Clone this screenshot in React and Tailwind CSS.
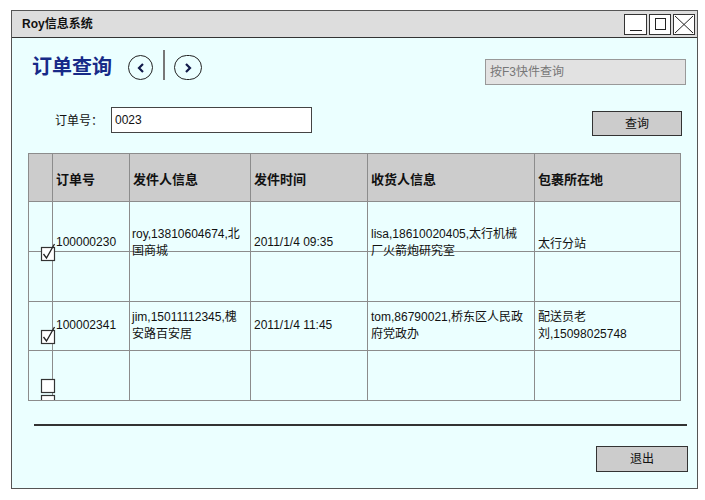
import React from 'react';

function Check({ checked }) {
  return (
    <svg width="14" height="14" viewBox="0 0 14 14" className="block overflow-visible">
      <rect x="0.5" y="0.5" width="13" height="13" fill="#fff" stroke="#333" strokeWidth="1.2" />
      {checked && <path d="M2.5 7 L5.5 11 L13.5 -3" fill="none" stroke="#222" strokeWidth="1.3" />}
    </svg>
  );
}

function Chevron({ dir }) {
  return (
    <svg width="10" height="12" viewBox="0 0 10 12">
      <polyline
        points={dir === 'left' ? '7,2 3,6 7,10' : '3,2 7,6 3,10'}
        fill="none"
        stroke="#111a4a"
        strokeWidth="2.2"
      />
    </svg>
  );
}

const headers = ['订单号', '发件人信息', '发件时间', '收货人信息', '包裹所在地'];

export default function App() {
  return (
    <div className="w-[705px] h-[500px] bg-white overflow-hidden font-['Liberation_Sans','Noto_Sans_CJK_SC',sans-serif] text-[#111]">
      <div className="ml-[11px] mt-[10px] w-[687px] h-[479px] border border-[#555] flex flex-col">
        {/* title bar */}
        <div className="h-[27px] shrink-0 bg-[#dddddd] border-b border-[#333] flex items-center justify-between pl-[10px] pr-[2px]">
          <span className="text-[12px] font-bold">Roy信息系统</span>
          <div className="flex gap-[2px]">
            <div className="w-[23px] h-[21px] bg-white border border-[#333] flex items-end justify-center pb-[3px]">
              <div className="w-[12px] h-px bg-[#222]" />
            </div>
            <div className="w-[22px] h-[21px] bg-white border border-[#333] flex items-center justify-center">
              <div className="w-[11px] h-[12px] border border-[#222]" />
            </div>
            <div className="w-[22px] h-[21px] bg-white border border-[#333] flex items-center justify-center">
              <svg width="20" height="19" viewBox="0 0 20 19">
                <path d="M1 1 L19 18 M19 1 L1 18" stroke="#222" strokeWidth="1" />
              </svg>
            </div>
          </div>
        </div>

        {/* content */}
        <div className="flex-1 bg-[#ebffff] flex flex-col">
          <div className="flex items-start pt-[12px] pl-[20px] pr-[11px]">
            <h1 className="w-[96px] mt-[5px] text-[20px] leading-[24px] font-bold text-[#172a88]">订单查询</h1>
            <div className="mt-[5px] w-[25px] h-[25px] rounded-full border border-[#222] flex items-center justify-center">
              <Chevron dir="left" />
            </div>
            <div className="ml-[10px] w-[2px] h-[30px] bg-[#777]" />
            <div className="ml-[9px] mt-[5px] w-[28px] h-[25px] rounded-full border border-[#222] flex items-center justify-center">
              <Chevron dir="right" />
            </div>
            <div className="flex-1" />
            <div className="mt-[9px] w-[201px] h-[26px] bg-[#e2e2e2] border border-[#999] pl-[4px] flex items-center text-[12px] text-[#777]">
              按F3快件查询
            </div>
          </div>

          <div className="flex items-start mt-[22px] pl-[43px] pr-[15px]">
            <span className="mt-[6px] w-[56px] text-[12px] leading-[16px]">订单号：</span>
            <div className="w-[201px] h-[26px] bg-white border border-[#444] pl-[3px] flex items-center text-[12px]">0023</div>
            <div className="flex-1" />
            <button className="mt-[4px] w-[90px] h-[25px] bg-[#cccccc] border border-[#333] text-[12px]">查询</button>
          </div>

          {/* table */}
          <div className="mt-[17px] ml-[16px] w-[653px] border-t border-l border-[#8c8c8c] grid grid-cols-[24px_77px_121px_117px_167px_146px] grid-rows-[48px_50px_50px_49px_50px] text-[12px] leading-[17px]">
            <div className="bg-[#cccccc] border-r border-b border-[#8c8c8c]" />
            {headers.map((h) => (
              <div key={h} className="bg-[#cccccc] border-r border-b border-[#8c8c8c] flex items-center pl-[3px] pt-[4px] text-[13px] font-bold">
                {h}
              </div>
            ))}

            {/* row 1 */}
            <div className="border-r border-b border-[#8c8c8c] flex justify-end pt-[45px]">
              <div className="-mr-[3px] relative"><Check checked /></div>
            </div>
            <div className="border-r border-b border-[#8c8c8c] pl-[3px] pt-[32px] whitespace-nowrap">100000230</div>
            <div className="border-r border-b border-[#8c8c8c] pl-[2px] pt-[24px] whitespace-nowrap">roy,13810604674,北<br />国商城</div>
            <div className="border-r border-b border-[#8c8c8c] pl-[3px] pt-[32px] whitespace-nowrap">2011/1/4 09:35</div>
            <div className="border-r border-b border-[#8c8c8c] pl-[3px] pt-[24px] whitespace-nowrap">lisa,18610020405,太行机械<br />厂火箭炮研究室</div>
            <div className="border-r border-b border-[#8c8c8c] pl-[3px] pt-[34px] whitespace-nowrap">太行分站</div>

            {/* row 2 */}
            {[0, 1, 2, 3, 4, 5].map((i) => (
              <div key={'e' + i} className="border-r border-b border-[#8c8c8c]" />
            ))}

            {/* row 3 */}
            <div className="border-r border-b border-[#8c8c8c] flex justify-end pt-[28px]">
              <div className="-mr-[3px] relative"><Check checked /></div>
            </div>
            <div className="border-r border-b border-[#8c8c8c] pl-[3px] pt-[15px] whitespace-nowrap">100002341</div>
            <div className="border-r border-b border-[#8c8c8c] pl-[2px] pt-[7px] whitespace-nowrap">jim,15011112345,槐<br />安路百安居</div>
            <div className="border-r border-b border-[#8c8c8c] pl-[3px] pt-[15px] whitespace-nowrap">2011/1/4 11:45</div>
            <div className="border-r border-b border-[#8c8c8c] pl-[3px] pt-[7px] whitespace-nowrap">tom,86790021,桥东区人民政<br />府党政办</div>
            <div className="border-r border-b border-[#8c8c8c] pl-[3px] pt-[7px] whitespace-nowrap">配送员老<br />刘,15098025748</div>

            {/* row 4 */}
            <div className="border-r border-b border-[#8c8c8c] flex flex-col items-end gap-[2px] pt-[28px] overflow-y-clip">
              <div className="-mr-[3px] relative"><Check /></div>
              <div className="-mr-[3px] relative"><Check /></div>
            </div>
            {[1, 2, 3, 4, 5].map((i) => (
              <div key={'f' + i} className="border-r border-b border-[#8c8c8c]" />
            ))}
          </div>

          <div className="mt-[23px] ml-[22px] mr-[10px] h-[2px] bg-[#333]" />

          <div className="flex justify-end mt-[20px] pr-[9px]">
            <button className="w-[92px] h-[26px] bg-[#cccccc] border border-[#333] text-[12px]">退出</button>
          </div>
        </div>
      </div>
    </div>
  );
}
